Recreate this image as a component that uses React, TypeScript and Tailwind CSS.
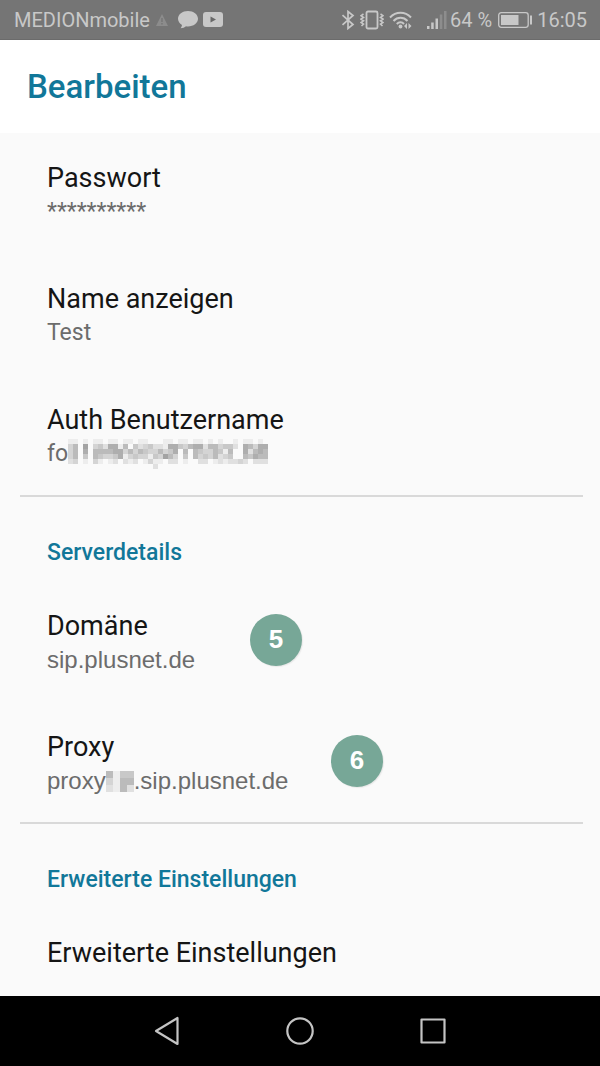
import type { ReactNode } from "react";

// Each digit is the darkness of one mosaic cell
const USERNAME_MOSAIC = [
  "1101011011011011000110110110101001011010",
  "3507034266150423422166435662553442065366",
  "3506055556635354335346050543354150062565",
  "3504054334613433143753040534352340054655",
  "2301031012021201311022010022012122320222",
  "0000000000000000020000000000000000000000",
];

const PROXY_MOSAIC = ["5144", "3155", "2152"];

function Mosaic({ rows, cell }: { rows: string[]; cell: number }) {
  const width = rows[0].length * cell;
  const height = rows.length * cell;

  return (
    <svg
      width={width}
      height={height}
      viewBox={`0 0 ${width} ${height}`}
      shapeRendering="crispEdges"
      className="shrink-0"
      aria-hidden="true"
    >
      {rows.map((row, y) =>
        row.split("").map((level, x) => (
          <rect
            key={`${x}-${y}`}
            x={x * cell}
            y={y * cell}
            width={cell}
            height={cell}
            fill="#000"
            opacity={Number(level) * 0.05}
          />
        ))
      )}
    </svg>
  );
}

function StatusBar() {
  return (
    <header className="flex h-10 items-center justify-between bg-[#757575] pl-3.5 pr-[13px] text-[20px] leading-6 text-[#c8c8c8] border-b border-[#6b6b6b]">
      <div className="flex items-center">
        <span>MEDIONmobile</span>
        <svg width="12" height="12" viewBox="0 0 12 12" className="ml-1.5" aria-hidden="true">
          <path d="M6 0 12 12H0Z" fill="#8c8c8c" />
          <path d="M6 4v4M6 9v1.5" stroke="#757575" strokeWidth="1.4" />
        </svg>
        <svg width="20" height="18" viewBox="0 0 20 18" className="ml-2.5" fill="currentColor" aria-hidden="true">
          <path d="M10 0C4.5 0 0 3.4 0 7.7c0 2.600 1.600 4.800 4 6.200-.1 1.300-.7 2.400-1.400 3.400 2.200-.2 4.100-1 5.400-2.100.6.1 1.300.2 2 .2 5.500 0 10-3.400 10-7.700S15.500 0 10 0Z" />
        </svg>
        <svg width="20" height="15" viewBox="0 0 20 15" className="ml-[5px]" aria-hidden="true">
          <rect width="20" height="15" rx="3" fill="currentColor" />
          <path d="M7.500 4.500 13 7.500 7.500 10.500Z" fill="#686868" />
        </svg>
      </div>
      <div className="flex items-center">
        <svg width="14" height="20" viewBox="0 0 14 20" fill="none" stroke="currentColor" strokeWidth="1.700" aria-hidden="true">
          <path d="M1.500 5.200 12 14.500 7 18.500V1.500L12 5.500 1.500 14.800" />
        </svg>
        <svg width="24" height="20" viewBox="0 0 24 20" className="ml-[5px]" fill="none" stroke="currentColor" aria-hidden="true">
          <rect x="6.500" y="1.500" width="11" height="17" rx="1.500" strokeWidth="1.800" />
          <path
            d="M3.500 4 1 5.700l2.500 1.700L1 9.100l2.500 1.700L1 12.500l2.500 1.700L1.500 16M20.500 4 23 5.700l-2.500 1.700L23 9.100l-2.500 1.700 2.500 1.700-2.500 1.700 2 1.800"
            strokeWidth="1.600"
          />
        </svg>
        <svg width="24" height="18" viewBox="0 0 24 18" className="ml-[5px]" fill="none" stroke="currentColor" strokeWidth="2" aria-hidden="true">
          <path d="M1 6.500C7 .3 16 .3 22 6.500M4.500 10C8.500 5.800 14.500 5.800 18.500 10M7.800 13C10 10.600 13 10.600 15 13" />
          <circle cx="11.500" cy="15.500" r="1.900" fill="currentColor" stroke="none" />
          <path d="M18 12v6l-3-3ZM19.500 12v6l3-3Z" fill="currentColor" stroke="none" />
        </svg>
        <svg width="20" height="18" viewBox="0 0 20 18" className="ml-3.5" fill="currentColor" aria-hidden="true">
          <rect x="0" y="15" width="2.500" height="3" />
          <rect x="4.200" y="11.500" width="2.500" height="6.500" />
          <rect x="8.500" y="7.500" width="2.500" height="10.500" />
          <rect x="12.800" y="3.500" width="2.500" height="14.500" opacity=".3" />
          <rect x="17" y="0" width="2.500" height="18" opacity=".3" />
        </svg>
        <span className="ml-[3px]">64 %</span>
        <svg width="34" height="16" viewBox="0 0 34 16" className="ml-1.5" aria-hidden="true">
          <rect x=".7" y=".7" width="29.500" height="14.600" rx="2.500" fill="none" stroke="currentColor" strokeWidth="1.300" />
          <rect x="3" y="3" width="17.500" height="10" fill="currentColor" />
          <rect x="32" y="3.500" width="2" height="9" fill="currentColor" />
        </svg>
        <span className="ml-[5px]">16:05</span>
      </div>
    </header>
  );
}

function Preference({ title, badge, children }: { title: string; badge?: ReactNode; children?: ReactNode }) {
  return (
    <li className="relative">
      <button type="button" className="block w-full pt-7 pb-[25px] pl-[47px] pr-5 text-left">
        <span className="block text-[27px] leading-[34px] text-[#151515]">{title}</span>
        {children && (
          <span className="flex h-[34px] items-center text-[23px] leading-[34px] text-[#6c6c6c]">{children}</span>
        )}
      </button>
      {badge}
    </li>
  );
}

function SectionTitle({ children }: { children: ReactNode }) {
  return (
    <h2 className="pt-[39px] pb-[11px] pl-[47px] text-[23px] leading-[34px] font-medium text-[#117799]">{children}</h2>
  );
}

export default function App() {
  const badgeClass =
    "absolute top-[33px] flex size-[52px] items-center justify-center rounded-full bg-[#77a797] pb-0.5 font-['Liberation_Sans',sans-serif] text-[26px] leading-8 font-bold text-white shadow-[1px_1px_1px_#e8e8e8]";

  return (
    <div className="flex min-h-screen flex-col bg-[#fafafa] font-[Roboto,sans-serif]">
      <StatusBar />
      <div className="bg-white px-[27px] pt-[25px] pb-6">
        <h1 className="text-[33px] leading-[44px] font-medium text-[#117799]">Bearbeiten</h1>
      </div>

      <main className="flex-1">
        <section>
          <ul>
            <Preference title="Passwort">**********</Preference>
            <Preference title="Name anzeigen">Test</Preference>
            <Preference title="Auth Benutzername">
              fo
              <Mosaic rows={USERNAME_MOSAIC} cell={5} />
            </Preference>
          </ul>
        </section>
        <hr className="-mt-px ml-5 mr-[17px] border-t-2 border-[#d9d9d9]" />

        <section>
          <SectionTitle>Serverdetails</SectionTitle>
          <ul>
            <Preference title="Domäne" badge={<span className={`${badgeClass} left-[250px]`}>5</span>}>
              <span className="font-['Liberation_Sans',sans-serif] text-[24px]">sip.plusnet.de</span>
            </Preference>
            <Preference title="Proxy" badge={<span className={`${badgeClass} left-[331px]`}>6</span>}>
              <span className="flex items-center font-['Liberation_Sans',sans-serif] text-[24px]">
                proxy
                <Mosaic rows={PROXY_MOSAIC} cell={7} />
                <span>.sip.plusnet.de</span>
              </span>
            </Preference>
          </ul>
        </section>
        <hr className="-mt-px ml-5 mr-[17px] border-t-2 border-[#d9d9d9]" />

        <section>
          <SectionTitle>Erweiterte Einstellungen</SectionTitle>
          <ul>
            <Preference title="Erweiterte Einstellungen" />
          </ul>
        </section>
      </main>

      <nav className="grid h-[70px] grid-cols-3 bg-black px-[100px]">
        <button type="button" aria-label="Zurück" className="flex items-center justify-center">
          <svg width="26" height="30" viewBox="0 0 26 30" fill="none" stroke="#c4c4c4" strokeWidth="2.200" strokeLinejoin="round">
            <path d="M23.500 2V28L2 15Z" />
          </svg>
        </button>
        <button type="button" aria-label="Startseite" className="flex items-center justify-center">
          <svg width="30" height="30" viewBox="0 0 30 30" fill="none" stroke="#c4c4c4" strokeWidth="2.200">
            <circle cx="15" cy="15" r="12.700" />
          </svg>
        </button>
        <button type="button" aria-label="Übersicht" className="flex items-center justify-center">
          <svg width="26" height="26" viewBox="0 0 26 26" fill="none" stroke="#c4c4c4" strokeWidth="2.200" strokeLinejoin="round">
            <rect x="1.500" y="1.500" width="23" height="23" />
          </svg>
        </button>
      </nav>
    </div>
  );
}
